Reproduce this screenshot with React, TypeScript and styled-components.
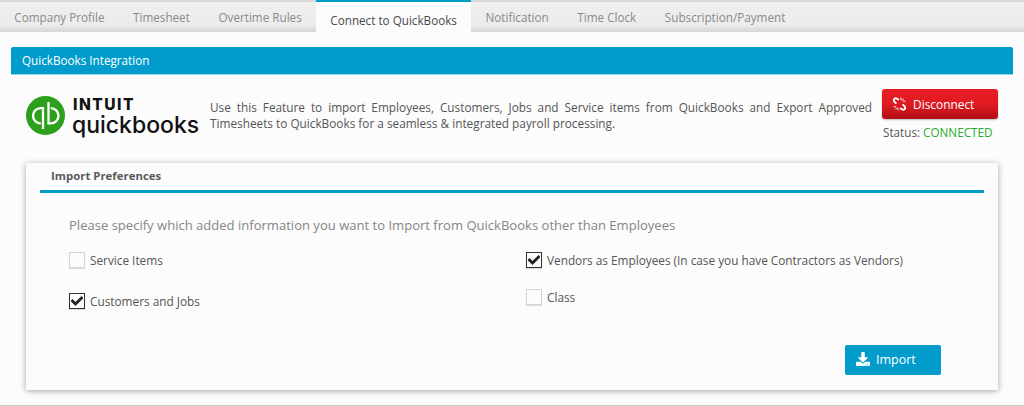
import React from "react";
import styled, { createGlobalStyle } from "styled-components";
import { FaCheck, FaDownload } from "react-icons/fa";

const Global = createGlobalStyle`
  html, body { margin: 0; padding: 0; background: #fcfcfc; }
  body { font-family: "Open Sans", "Liberation Sans", sans-serif; }
`;

const Page = styled.div`
  width: 1024px;
  height: 406px;
  box-sizing: border-box;
  overflow: hidden;
  background: #fcfcfc;
  border-bottom: 1px solid #c9c9c9;
  display: flex;
  flex-direction: column;
`;

const TabBar = styled.nav`
  height: 32px;
  box-sizing: border-box;
  border-top: 2px solid #d9d9d9;
  background: linear-gradient(#efefef 0%, #ececec 75%, #d6d6d6 100%);
  display: flex;
  flex: none;
`;

const Tab = styled.div<{ $active?: boolean }>`
  box-sizing: border-box;
  padding: 0 14.3px;
  margin-top: ${(p) => (p.$active ? "-2px" : "0")};
  height: ${(p) => (p.$active ? "34px" : "30px")};
  font-size: 11.7px;
  line-height: ${(p) => (p.$active ? "36px" : "31px")};
  white-space: nowrap;
  color: ${(p) => (p.$active ? "#4a4a4a" : "#8a8a8a")};
  background: ${(p) => (p.$active ? "#fcfcfc" : "transparent")};
  border-top: ${(p) => (p.$active ? "2px solid #019ccc" : "0")};
`;

const Content = styled.main`
  padding: 15px 11px 0;
  display: flex;
  flex-direction: column;
`;

const PanelHeader = styled.header`
  height: 28px;
  box-sizing: border-box;
  padding-left: 11px;
  border-radius: 2px 2px 0 0;
  background: #019ccc;
  color: #fff;
  font-size: 11.7px;
  line-height: 27px;
  border-bottom: 1px solid #8fd3e8;
`;

const IntroRow = styled.section`
  display: flex;
  align-items: flex-start;
  height: 88px;
  padding-left: 15px;
`;

const Logo = styled.div`
  display: flex;
  align-items: flex-start;
  gap: 7px;
  width: 184px;
  flex: none;
  margin-top: 21px;
`;

const MarkSvg = styled.svg`
  flex: none;
`;

const LogoWords = styled.div`
  display: flex;
  flex-direction: column;
  margin-top: 1px;
  color: #111;
  font-family: "Inter", "Open Sans", sans-serif;
`;

const LogoTop = styled.span`
  font-size: 15.5px;
  line-height: 15px;
  font-weight: 800;
  letter-spacing: 1.5px;
  margin-left: 1px;
`;

const LogoBottom = styled.span`
  font-size: 23px;
  line-height: 26px;
  font-weight: 500;
  letter-spacing: 0;
`;

const Description = styled.p`
  width: 662px;
  flex: none;
  margin: 24px 10px 0 0;
  font-size: 11.8px;
  line-height: 16px;
  color: #555;
  text-align: justify;
`;

const ConnectionBox = styled.div`
  width: 120px;
  flex: none;
  margin-top: 14px;
  display: flex;
  flex-direction: column;
  align-items: flex-start;
`;

const DisconnectButton = styled.button`
  width: 116px;
  height: 30px;
  box-sizing: border-box;
  border: 0;
  border-radius: 3px;
  padding: 0 0 1px 11px;
  display: flex;
  align-items: center;
  gap: 7px;
  background: linear-gradient(#e81c24 0%, #e01a22 50%, #b00f15 100%);
  box-shadow: 0 1px 2px rgba(0, 0, 0, 0.25);
  color: #fff;
  font: 11.9px "Open Sans", sans-serif;
`;

const Status = styled.div`
  margin: 5px 0 0 1px;
  font-size: 11.7px;
  line-height: 16px;
  color: #555;
  white-space: nowrap;
`;

const Connected = styled.span`
  color: #22ad2e;
`;

const Card = styled.section`
  margin: 0 15px;
  height: 227px;
  box-sizing: border-box;
  padding: 0 14px;
  background: #fcfcfc;
  box-shadow: 0 1px 6px rgba(0, 0, 0, 0.35);
  display: flex;
  flex-direction: column;
`;

const CardTitle = styled.h2`
  margin: 0;
  height: 30px;
  flex: none;
  box-sizing: border-box;
  padding-left: 11px;
  border-bottom: 3px solid #019ccc;
  font-size: 11.4px;
  line-height: 26px;
  font-weight: 700;
  color: #5a5a5a;
`;

const Prompt = styled.p`
  margin: 22px 0 0 29px;
  font-size: 13.06px;
  line-height: 20px;
  color: #868686;
`;

const Options = styled.div`
  margin: 17px 0 0 29px;
  display: grid;
  grid-template-columns: 457px 1fr;
`;

const OptionColumn = styled.div<{ $gap: number }>`
  display: flex;
  flex-direction: column;
  gap: ${(p) => p.$gap}px;
`;

const Option = styled.label`
  display: flex;
  align-items: center;
  gap: 5px;
  height: 16px;
  font-size: 11.8px;
  color: #555;
  white-space: nowrap;
`;

const Box = styled.span<{ $checked?: boolean }>`
  width: 16px;
  height: 16px;
  box-sizing: border-box;
  flex: none;
  display: flex;
  align-items: center;
  justify-content: center;
  background: #fcfcfc;
  border: 1px solid ${(p) => (p.$checked ? "#333" : "#d4d4d4")};
  box-shadow: 0 1px 1px rgba(0, 0, 0, 0.12);
  color: #222;
  font-size: 12px;

  svg {
    stroke: currentColor;
    stroke-width: 30px;
  }
`;

const Footer = styled.div`
  margin-top: 36px;
  padding-right: 43px;
  display: flex;
  justify-content: flex-end;
`;

const ImportButton = styled.button`
  width: 96px;
  height: 30px;
  box-sizing: border-box;
  border: 0;
  border-radius: 2px;
  padding: 0 0 2px 11px;
  display: flex;
  align-items: center;
  gap: 6px;
  background: #019ccc;
  color: #fff;
  font: 12.5px "Open Sans", sans-serif;
`;

const tabs = [
  "Company Profile",
  "Timesheet",
  "Overtime Rules",
  "Connect to QuickBooks",
  "Notification",
  "Time Clock",
  "Subscription/Payment",
];

const QbMark = () => (
  <MarkSvg width="39" height="39" viewBox="0 0 39 39" aria-hidden="true">
    <circle cx="19.5" cy="19.5" r="19.5" fill="#2ca01c" />
    <g fill="none" stroke="#fff" strokeWidth="2.3">
      <path d="M17 33V12.2h-2.4a7.6 7.6 0 0 0 0 15.2h.2" />
      <path d="M22.5 6v21.4h2.4a7.6 7.6 0 0 0 0-15.2h-.2" />
    </g>
  </MarkSvg>
);

const BrokenChain = () => (
  <MarkSvg width="13" height="14" viewBox="0 0 13 14" aria-hidden="true">
    <g fill="none" stroke="#fff" strokeWidth="1.9" strokeLinecap="round">
      <path d="M5.2 2.4 4 1.7a2 2 0 0 0-2.8 2.8l1.6 1.6" />
      <path d="M7.8 11.6l1.2.7a2 2 0 0 0 2.8-2.8L10.2 7.9" />
      <path d="M8 1v1.6M10.2 2l-.9 1.2M12 4.2h-1.6" strokeWidth="1" />
      <path d="M5 13v-1.6M2.8 12l.9-1.2M1 9.8h1.6" strokeWidth="1" />
    </g>
  </MarkSvg>
);

export default function App() {
  return (
    <Page>
      <Global />
      <TabBar>
        {tabs.map((t) => (
          <Tab key={t} $active={t === "Connect to QuickBooks"}>
            {t}
          </Tab>
        ))}
      </TabBar>
      <Content>
        <PanelHeader>QuickBooks Integration</PanelHeader>
        <IntroRow>
          <Logo>
            <QbMark />
            <LogoWords>
              <LogoTop>INTUIT</LogoTop>
              <LogoBottom>quickbooks</LogoBottom>
            </LogoWords>
          </Logo>
          <Description>
            Use this Feature to import Employees, Customers, Jobs and Service items from QuickBooks and Export Approved
            Timesheets to QuickBooks for a seamless &amp; integrated payroll processing.
          </Description>
          <ConnectionBox>
            <DisconnectButton>
              <BrokenChain />
              Disconnect
            </DisconnectButton>
            <Status>
              Status: <Connected>CONNECTED</Connected>
            </Status>
          </ConnectionBox>
        </IntroRow>
        <Card>
          <CardTitle>Import Preferences</CardTitle>
          <Prompt>Please specify which added information you want to Import from QuickBooks other than Employees</Prompt>
          <Options>
            <OptionColumn $gap={25}>
              <Option>
                <Box />
                Service Items
              </Option>
              <Option>
                <Box $checked>
                  <FaCheck />
                </Box>
                Customers and Jobs
              </Option>
            </OptionColumn>
            <OptionColumn $gap={21}>
              <Option>
                <Box $checked>
                  <FaCheck />
                </Box>
                Vendors as Employees (In case you have Contractors as Vendors)
              </Option>
              <Option>
                <Box />
                Class
              </Option>
            </OptionColumn>
          </Options>
          <Footer>
            <ImportButton>
              <FaDownload size={14} />
              Import
            </ImportButton>
          </Footer>
        </Card>
      </Content>
    </Page>
  );
}
